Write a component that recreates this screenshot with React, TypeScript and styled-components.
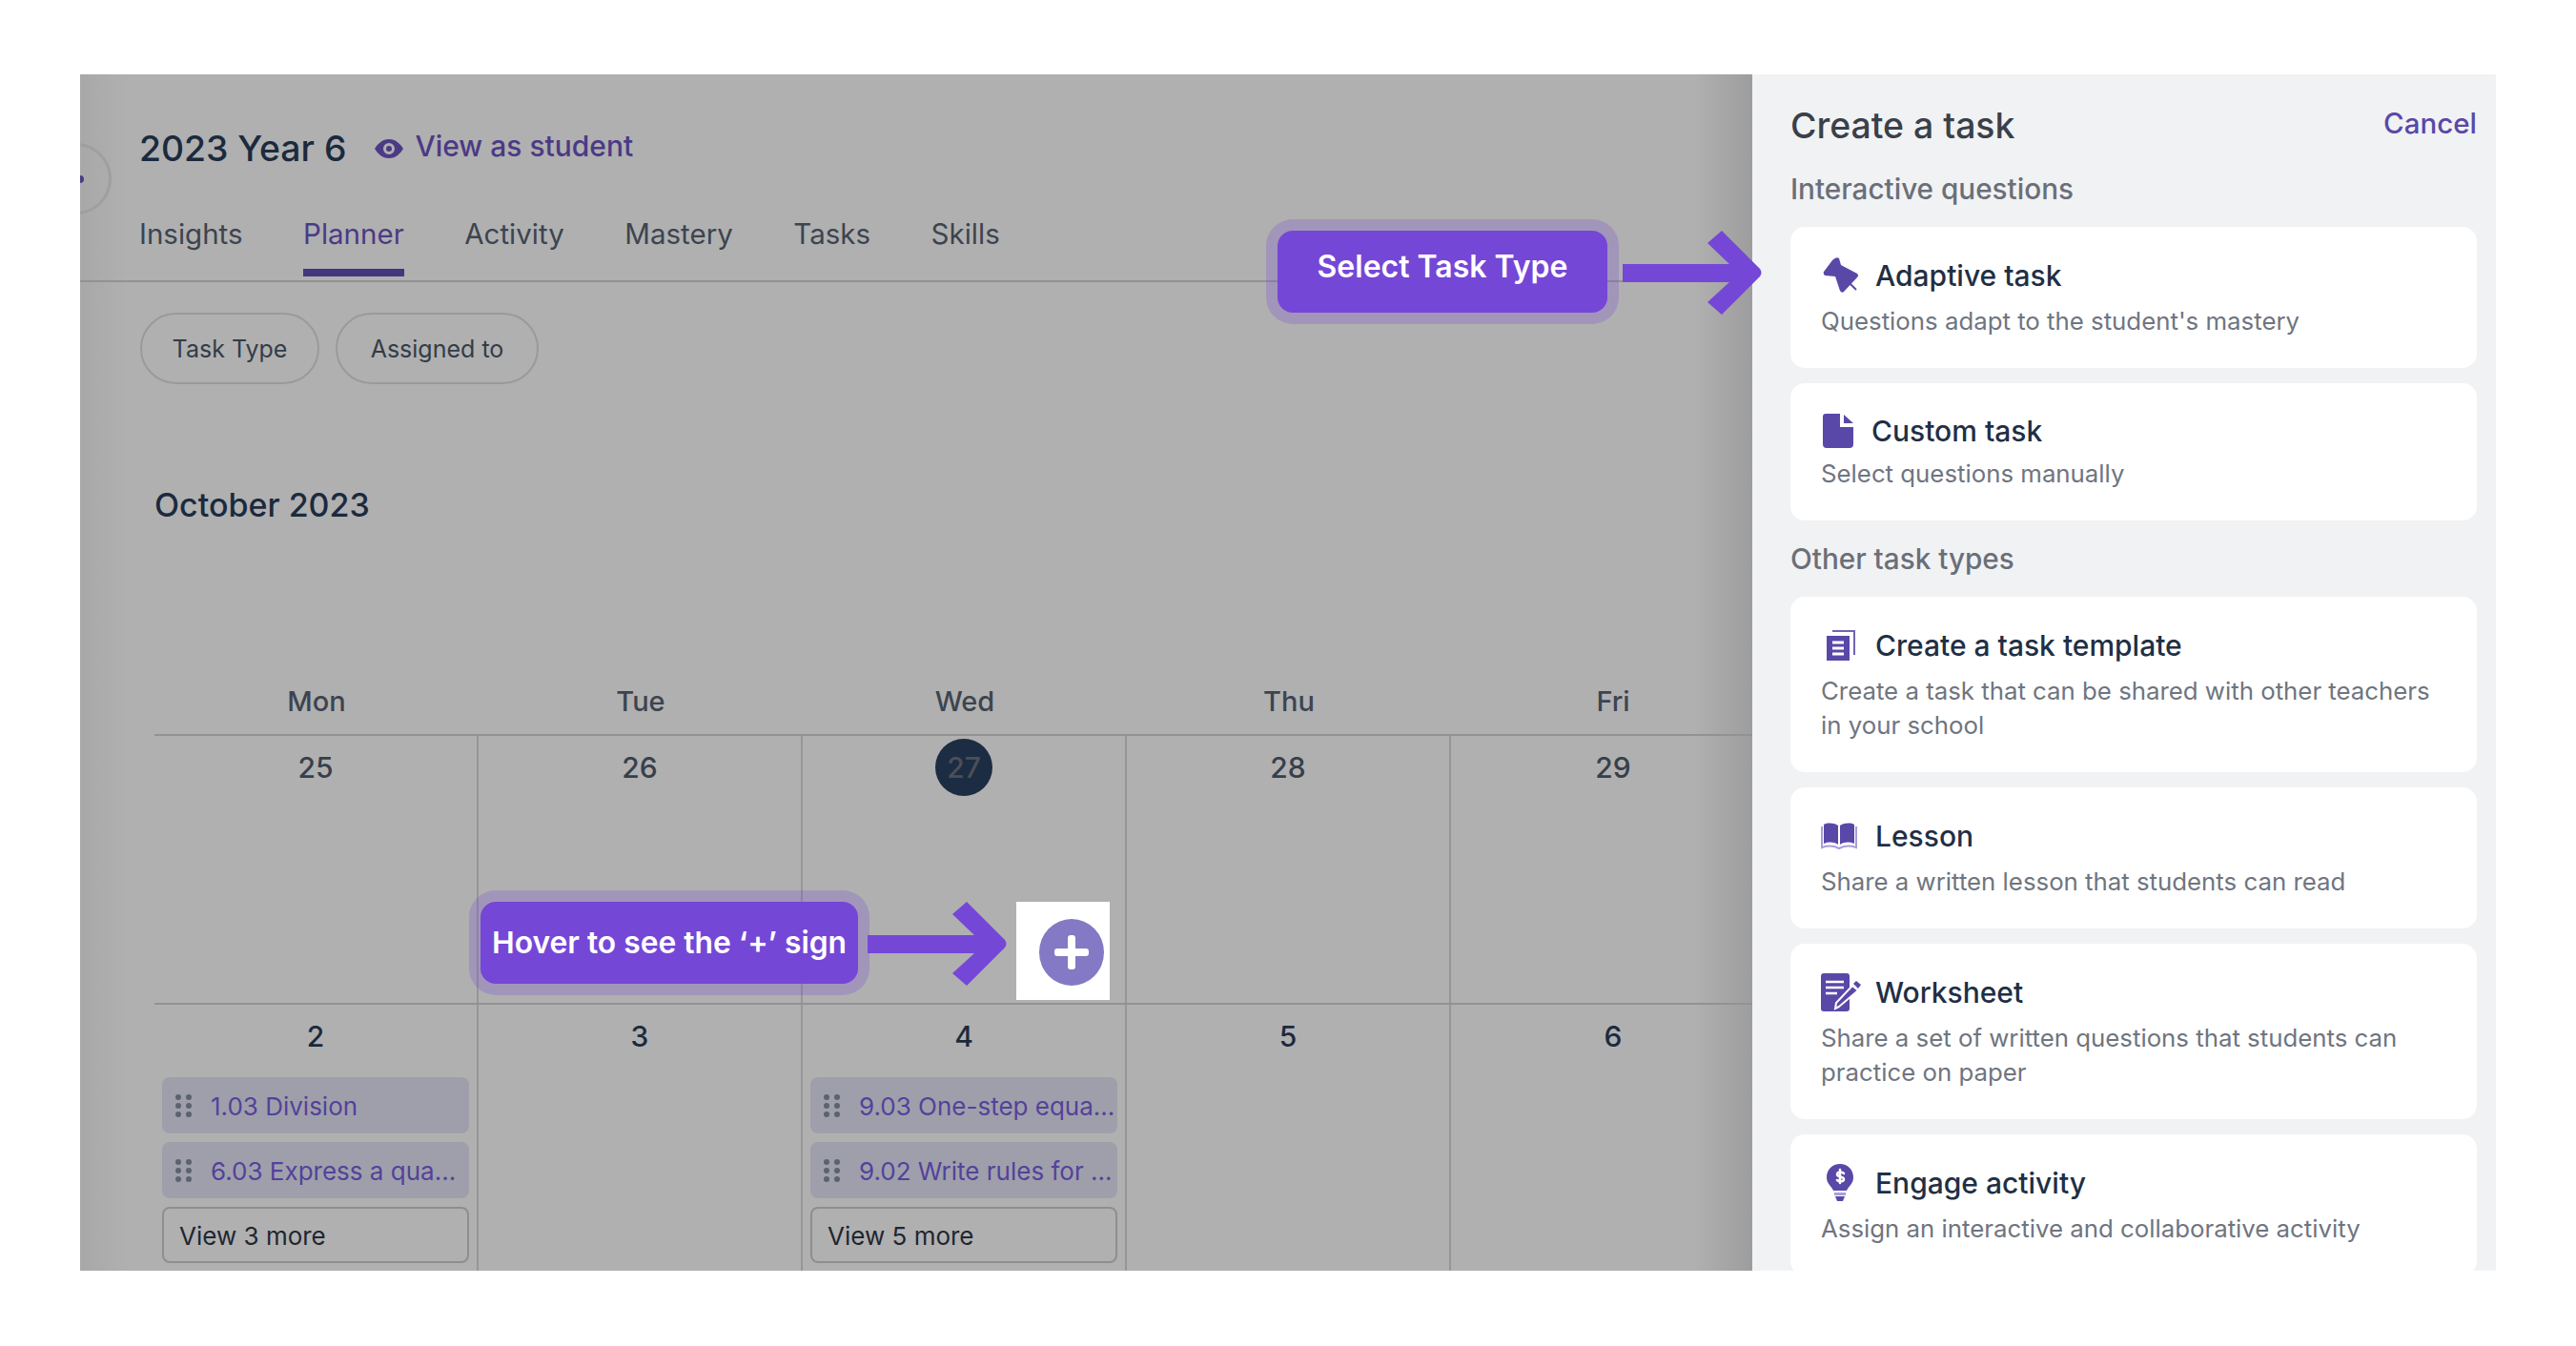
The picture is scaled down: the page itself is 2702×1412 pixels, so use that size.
import React from "react";
import styled, { createGlobalStyle } from "styled-components";

const Global = createGlobalStyle`
  html, body { margin: 0; padding: 0; background: #fff; }
  * { box-sizing: border-box; }
  body { font-family: Inter, "Noto Sans", sans-serif; }
`;

const Page = styled.div`
  width: 2702px;
  height: 1412px;
  padding: 78px 84px 0;
  background: #fff;
`;
const Frame = styled.div`
  position: relative;
  display: flex;
  width: 2534px;
  height: 1255px;
  overflow: hidden;
`;
const Main = styled.main`
  position: relative;
  width: 1754px;
  flex: none;
  overflow: hidden;
  padding-top: 47px;
  background: linear-gradient(to right, #a8a8a8 0, #b0b0b0 50px, #b0b0b0 calc(100% - 60px), #9d9d9d 100%);
`;
const BackCircle = styled.div`
  position: absolute;
  left: -42px;
  top: 72px;
  width: 75px;
  height: 75px;
  border-radius: 50%;
  border: 3px solid #9f9f9f;
  &::after {
    content: "";
    position: absolute;
    left: 39px;
    top: 31px;
    width: 4px;
    height: 8px;
    border-radius: 0 4px 4px 0;
    background: #4b3a85;
  }
`;
const Header = styled.div`
  display: flex;
  align-items: center;
  height: 60px;
  padding-left: 62px;
`;
const CourseTitle = styled.h1`
  margin: 0 30px 0 0;
  font-size: 37.3px;
  font-weight: 500;
  color: #1b2a3e;
`;
const StudentLink = styled.a`
  display: flex;
  align-items: center;
  gap: 12px;
  font-size: 30px;
  font-weight: 500;
  color: #4b3a85;
  line-height: 36px;
  margin-top: -4px;
`;
const TabBar = styled.nav`
  display: flex;
  gap: 63.5px;
  margin-top: 31px;
  padding: 0 0 4px 62px;
  border-bottom: 2px solid #929292;
`;
const Tab = styled.a<{ $active?: boolean }>`
  display: block;
  height: 74px;
  line-height: 59px;
  font-size: 29.5px;
  color: ${(p) => (p.$active ? "#4b3a85" : "#3c4450")};
  border-bottom: 8px solid ${(p) => (p.$active ? "#44357f" : "transparent")};
`;
const Filters = styled.div`
  display: flex;
  gap: 17px;
  margin: 32px 0 0 63px;
`;
const Pill = styled.button<{ $w: number }>`
  width: ${(p) => p.$w}px;
  height: 75px;
  border-radius: 38px;
  border: 2px solid #9a9a9a;
  background: transparent;
  font: 400 25px Inter, sans-serif;
  color: #333c47;
  padding: 0;
`;
const Month = styled.h2`
  margin: 102px 0 0 78px;
  font-size: 34px;
  line-height: 50px;
  font-weight: 500;
  color: #1b2a3e;
`;
const Calendar = styled.div`
  margin-left: 78px;
  width: 1700px;
`;
const WeekRow = styled.div`
  display: grid;
  grid-template-columns: repeat(5, 340px);
  height: 215px;
  align-items: end;
  padding-bottom: 17px;
`;
const WeekDay = styled.div`
  text-align: center;
  font-size: 29px;
  line-height: 34px;
  font-weight: 500;
  color: #3c4450;
`;
const DayRow = styled.div`
  display: grid;
  grid-template-columns: repeat(5, 340px);
  height: 282px;
  border-top: 2px solid #929292;
`;
const DayCell = styled.div`
  display: flex;
  flex-direction: column;
  align-items: stretch;
  padding: 15px 8px 0;
  border-right: 2px solid #969696;
  &:last-child { border-right: 0; }
`;
const DateNum = styled.div<{ $strong?: boolean }>`
  text-align: center;
  font-size: 30px;
  line-height: 36px;
  font-weight: 500;
  color: ${(p) => (p.$strong ? "#1b2a3e" : "#36404c")};
  margin-bottom: 25px;
`;
const TodayNum = styled(DateNum)`
  position: relative;
  z-index: 0;
  color: #4a4f57;
  &::before {
    content: "";
    position: absolute;
    z-index: -1;
    left: 50%;
    top: 50%;
    width: 60px;
    height: 60px;
    margin: -30px 0 0 -30px;
    border-radius: 50%;
    background: #1c2c42;
  }
`;
const TaskCard = styled.div`
  display: flex;
  align-items: center;
  height: 59px;
  margin-bottom: 9px;
  padding: 0 0 0 14px;
  border-radius: 8px;
  background: #9f9fab;
  white-space: nowrap;
  overflow: hidden;
`;
const Grip = styled.span`
  display: grid;
  grid-template-columns: 6px 6px;
  gap: 3px 5px;
  flex: none;
  margin-right: 20px;
  & > i {
    width: 6px;
    height: 6px;
    border-radius: 50%;
    background: #5b6270;
  }
`;
const TaskName = styled.span`
  font-size: 26px;
  color: #53429a;
  padding-top: 2px;
`;
const MoreBtn = styled.div`
  height: 59px;
  border: 2px solid #8e8e8e;
  border-radius: 8px;
  padding-left: 16px;
  line-height: 57px;
  font-size: 26px;
  color: #1f2630;
`;
const Panel = styled.aside`
  width: 780px;
  flex: none;
  padding: 28px 20px 0 40px;
  background: #f1f2f4;
`;
const PanelHead = styled.div`
  display: flex;
  justify-content: space-between;
  align-items: center;
  height: 50px;
  margin-bottom: 22px;
`;
const PanelTitle = styled.h2`
  margin: 0;
  font-size: 37.4px;
  font-weight: 500;
  color: #3a4049;
`;
const Cancel = styled.a`
  font-size: 29.5px;
  font-weight: 500;
  color: #5a48a8;
  margin-top: -4px;
`;
const SectionLabel = styled.h3`
  margin: 0 0 20px;
  font-size: 29.7px;
  line-height: 40px;
  font-weight: 500;
  color: #6a6f78;
`;
const CardGroup = styled.div`
  display: flex;
  flex-direction: column;
  gap: 16px;
  margin-bottom: 20px;
`;
const TypeCard = styled.div`
  padding: 31px 32px;
  border-radius: 15px;
  background: #fff;
`;
const TypeTitle = styled.div<{ $tight?: boolean }>`
  display: flex;
  align-items: center;
  height: ${(p) => (p.$tight ? 38 : 40)}px;
  margin-bottom: ${(p) => (p.$tight ? 8 : 10)}px;
  font-size: 30px;
  font-weight: 500;
  color: #1f2f45;
`;
const IconSlot = styled.span<{ $w?: number }>`
  display: flex;
  align-items: center;
  flex: none;
  width: ${(p) => p.$w ?? 57}px;
  color: #5a48a8;
`;
const TypeDesc = styled.p`
  margin: 0;
  font-size: 25.8px;
  line-height: 36px;
  color: #6f7580;
`;
const Callout = styled.div<{ $left: number; $top: number; $w: number; $size: number; $lift: number }>`
  position: absolute;
  left: ${(p) => p.$left}px;
  top: ${(p) => p.$top}px;
  width: ${(p) => p.$w}px;
  height: 86px;
  display: flex;
  align-items: center;
  justify-content: center;
  padding-bottom: ${(p) => p.$lift}px;
  border-radius: 16px;
  background: #7547d6;
  box-shadow: 0 0 0 12px rgba(117, 71, 214, 0.25);
  font: 600 ${(p) => p.$size}px Inter, sans-serif;
  color: #fff;
  white-space: nowrap;
`;
const Arrow = styled.svg<{ $left: number; $top: number }>`
  position: absolute;
  left: ${(p) => p.$left}px;
  top: ${(p) => p.$top}px;
`;
const PlusBox = styled.div`
  position: absolute;
  left: 982px;
  top: 868px;
  width: 98px;
  height: 103px;
  display: flex;
  align-items: center;
  justify-content: center;
  padding: 2px 0 0 18px;
  background: #fff;
`;
const PlusCircle = styled.div`
  position: relative;
  width: 68px;
  height: 70px;
  border-radius: 50%;
  background: #8379c4;
  &::before, &::after {
    content: "";
    position: absolute;
    left: 50%;
    top: 50%;
    background: #fff;
    border-radius: 3px;
  }
  &::before { width: 36px; height: 8px; margin: -4px 0 0 -18px; }
  &::after { width: 8px; height: 36px; margin: -18px 0 0 -4px; }
`;

const EyeIcon = () => (
  <svg width="30" height="22" viewBox="0 0 30 22" style={{ marginTop: 6 }}>
    <path fill="#4b3a85" fillRule="evenodd" d="M15 1C8 1 3 6 0 11c3 5 8 10 15 10s12-5 15-10C27 6 22 1 15 1zm0 4a6 6 0 1 1 0 12 6 6 0 0 1 0-12z" />
    <circle cx="15" cy="11" r="3" fill="#4b3a85" />
  </svg>
);
const PinIcon = () => (
  <svg width="38" height="38" viewBox="0 0 38 38" style={{ marginLeft: 2 }}>
    <path fill="currentColor" d="M1 15 10 3Q14-1 17 1L19 8 36 17Q38 19 36 21L22 36Q20 38 18 35L13 20 2 19Q0 17 1 15z" />
    <path stroke="currentColor" strokeWidth="2" d="M27 26l8 8" />
  </svg>
);
const FileIcon = () => (
  <svg width="32" height="36" viewBox="0 0 32 36" style={{ marginLeft: 2 }}>
    <path fill="currentColor" d="M3 0h15v14h14v18a4 4 0 0 1-4 4H4a4 4 0 0 1-4-4V3a3 3 0 0 1 3-3z" />
    <path fill="currentColor" d="M22 1l10 9H22z" />
  </svg>
);
const TemplateIcon = () => (
  <svg width="30" height="32" viewBox="0 0 30 32" style={{ marginLeft: 6 }}>
    <path fill="currentColor" d="M0 6h24v26H0z" />
    <path fill="none" stroke="currentColor" strokeWidth="2" d="M6 1h23v25" opacity=".85" />
    <path stroke="#fff" strokeWidth="3" d="M6 13h12M6 19h12M6 25h12" />
  </svg>
);
const BookIcon = () => (
  <svg width="38" height="28" viewBox="0 0 38 28">
    <path fill="currentColor" d="M3 2C7 0 13 0 18 3v20c-5-3-10-3-15-1zM35 2c-4-2-10-2-15 1v20c5-3 10-3 15-1z" />
    <path fill="none" stroke="#a79ed8" strokeWidth="2" d="M1 4v22c6-2 12-2 18 1 6-3 12-3 18-1V4" />
  </svg>
);
const SheetIcon = () => (
  <svg width="42" height="40" viewBox="0 0 42 40">
    <rect width="30" height="40" rx="3" fill="currentColor" />
    <path stroke="#fff" strokeWidth="2.5" d="M5 9h19M5 15h19M5 21h12" />
    <path fill="currentColor" stroke="#fff" strokeWidth="2" d="M19 35l-4 2 1-6L33 13l6 5z" />
    <path fill="currentColor" d="M34 11l3-3 5 4-3 4z" />
  </svg>
);
const BulbIcon = () => (
  <svg width="30" height="40" viewBox="0 0 30 40" style={{ marginLeft: 5 }}>
    <path fill="currentColor" d="M15 0c8 0 14 6 14 14 0 7-5 9-7 14H8C6 23 1 21 1 14 1 6 7 0 15 0z" />
    <path fill="none" stroke="#fff" strokeWidth="2.5" strokeLinecap="round" d="M19 10c-2-2-7-2-7 1s7 2 7 5-5 3-7 1M15 6v14" />
    <path fill="#a79ed8" d="M9 30h12v3H9z" />
    <path fill="currentColor" d="M10 34h10l-2 5h-6z" />
  </svg>
);

const ArrowShape = ({ left, top }: { left: number; top: number }) => (
  <Arrow $left={left} $top={top} width="148" height="90" viewBox="0 0 148 90">
    <path fill="#7547d6" d="M0 35H112L89 13 104 0 144 40q3 4 0 8L104 88 89 75 112 54H0z" />
  </Arrow>
);

const GripDots = () => (
  <Grip>
    {Array.from({ length: 6 }).map((_, i) => (
      <i key={i} />
    ))}
  </Grip>
);

const Task = ({ name }: { name: string }) => (
  <TaskCard>
    <GripDots />
    <TaskName>{name}</TaskName>
  </TaskCard>
);

const tabs = ["Insights", "Planner", "Activity", "Mastery", "Tasks", "Skills"];
const days = ["Mon", "Tue", "Wed", "Thu", "Fri"];

export default function App() {
  return (
    <Page>
      <Global />
      <Frame>
        <Main>
          <BackCircle />
          <Header>
            <CourseTitle>2023 Year 6</CourseTitle>
            <StudentLink>
              <EyeIcon />
              View as student
            </StudentLink>
          </Header>
          <TabBar>
            {tabs.map((t) => (
              <Tab key={t} $active={t === "Planner"}>
                {t}
              </Tab>
            ))}
          </TabBar>
          <Filters>
            <Pill $w={188}>Task Type</Pill>
            <Pill $w={213}>Assigned to</Pill>
          </Filters>
          <Month>October 2023</Month>
          <Calendar>
            <WeekRow>
              {days.map((d) => (
                <WeekDay key={d}>{d}</WeekDay>
              ))}
            </WeekRow>
            <DayRow>
              <DayCell><DateNum>25</DateNum></DayCell>
              <DayCell><DateNum>26</DateNum></DayCell>
              <DayCell><TodayNum>27</TodayNum></DayCell>
              <DayCell><DateNum>28</DateNum></DayCell>
              <DayCell><DateNum>29</DateNum></DayCell>
            </DayRow>
            <DayRow>
              <DayCell>
                <DateNum $strong>2</DateNum>
                <Task name="1.03 Division" />
                <Task name="6.03 Express a qua..." />
                <MoreBtn>View 3 more</MoreBtn>
              </DayCell>
              <DayCell><DateNum $strong>3</DateNum></DayCell>
              <DayCell>
                <DateNum $strong>4</DateNum>
                <Task name="9.03 One-step equa..." />
                <Task name="9.02 Write rules for ..." />
                <MoreBtn>View 5 more</MoreBtn>
              </DayCell>
              <DayCell><DateNum $strong>5</DateNum></DayCell>
              <DayCell><DateNum $strong>6</DateNum></DayCell>
            </DayRow>
          </Calendar>
        </Main>
        <Panel>
          <PanelHead>
            <PanelTitle>Create a task</PanelTitle>
            <Cancel>Cancel</Cancel>
          </PanelHead>
          <SectionLabel>Interactive questions</SectionLabel>
          <CardGroup>
            <TypeCard>
              <TypeTitle>
                <IconSlot><PinIcon /></IconSlot>
                Adaptive task
              </TypeTitle>
              <TypeDesc>Questions adapt to the student's mastery</TypeDesc>
            </TypeCard>
            <TypeCard>
              <TypeTitle $tight>
                <IconSlot $w={53}><FileIcon /></IconSlot>
                Custom task
              </TypeTitle>
              <TypeDesc>Select questions manually</TypeDesc>
            </TypeCard>
          </CardGroup>
          <SectionLabel>Other task types</SectionLabel>
          <CardGroup>
            <TypeCard>
              <TypeTitle>
                <IconSlot><TemplateIcon /></IconSlot>
                Create a task template
              </TypeTitle>
              <TypeDesc>Create a task that can be shared with other teachers in your school</TypeDesc>
            </TypeCard>
            <TypeCard>
              <TypeTitle>
                <IconSlot><BookIcon /></IconSlot>
                Lesson
              </TypeTitle>
              <TypeDesc>Share a written lesson that students can read</TypeDesc>
            </TypeCard>
            <TypeCard>
              <TypeTitle>
                <IconSlot><SheetIcon /></IconSlot>
                Worksheet
              </TypeTitle>
              <TypeDesc>Share a set of written questions that students can practice on paper</TypeDesc>
            </TypeCard>
            <TypeCard>
              <TypeTitle>
                <IconSlot><BulbIcon /></IconSlot>
                Engage activity
              </TypeTitle>
              <TypeDesc>Assign an interactive and collaborative activity</TypeDesc>
            </TypeCard>
          </CardGroup>
        </Panel>
        <Callout $left={1256} $top={164} $w={346} $size={32} $lift={12}>Select Task Type</Callout>
        <ArrowShape left={1618} top={164} />
        <Callout $left={420} $top={868} $w={396} $size={31.8} $lift={2}>Hover to see the ‘+’ sign</Callout>
        <ArrowShape left={826} top={868} />
        <PlusBox><PlusCircle /></PlusBox>
      </Frame>
    </Page>
  );
}
